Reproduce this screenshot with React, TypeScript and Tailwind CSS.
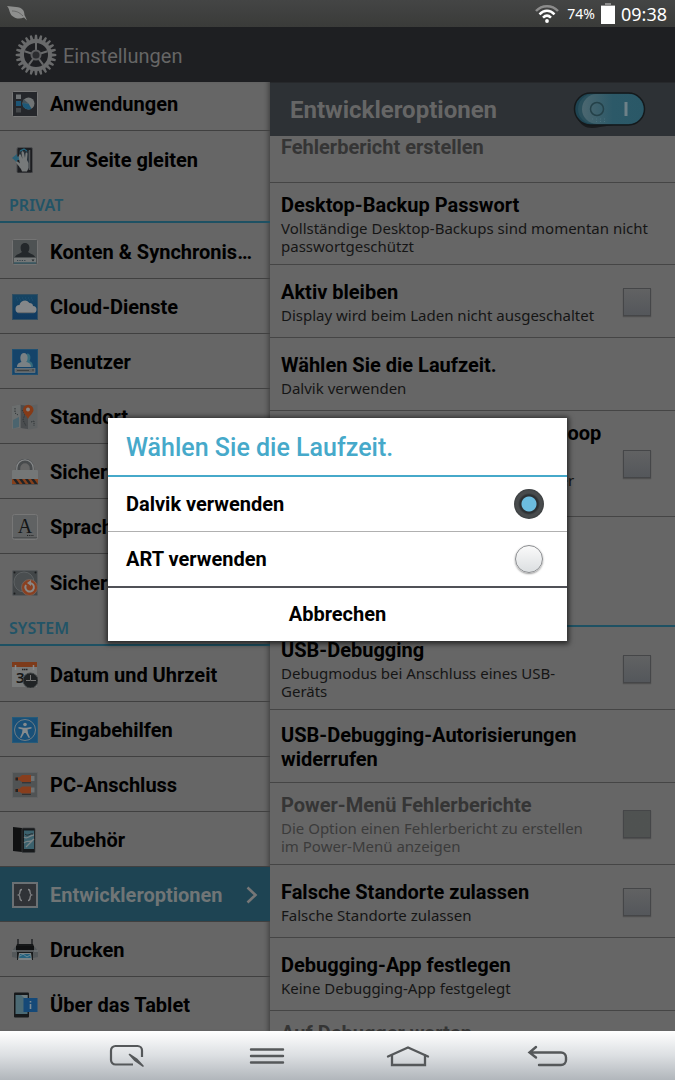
import type { ReactNode } from "react";

function Icon({ children }: { children: ReactNode }) {
  return (
    <svg viewBox="0 0 26 26" className="size-[26px] shrink-0" aria-hidden="true">
      {children}
    </svg>
  );
}

const AppsIcon = () => (
  <Icon>
    <rect x=".5" y=".5" width="25" height="25" rx="1" fill="#25272b" stroke="#787878" />
    <rect x="4" y="3.5" width="5" height="4.5" fill="#6f7375" />
    <rect x="4" y="10" width="5" height="5" fill="#1c5576" />
    <rect x="4" y="17" width="5" height="4.5" fill="#45484b" />
    <circle cx="16.5" cy="12.5" r="6" fill="#707475" />
    <path d="M16.500 12.500L10.500 12A6 6 0 0 0 19.500 17.700Z" fill="#1d5878" />
    <path d="M16.500 12.500L10.500 12A6 6 0 0 1 12 8.500Z" fill="#43525a" />
  </Icon>
);

const SlideIcon = () => (
  <Icon>
    <rect x="5" y=".5" width="15.500" height="25.500" rx="1.500" fill="#1c1d20" stroke="#4b4c4e" />
    <rect x="7" y="4" width="10" height="17" fill="#273138" />
    <path d="M17.500 3v20" stroke="#55585a" strokeWidth="1.500" />
    <path d="M0 11l5-4v2.500h4v3.500H5v2.500z" fill="#2a6076" />
    <path d="M7 12c-1-4 1-6 2-4l1.500 4-1-6c0-2.500 2-2.500 2.500 0l1 5 .5-4.500c.5-1.500 2-1 2 .5l-.5 6 1.500 3v5c-.5 2-1.500 3-1.500 3.500h-5c-1-4-5-7-6-9 0-2 2-1 4 1z" fill="#777a7a" />
    <path d="M8 4l4-2 3 2" fill="none" stroke="#26637a" strokeWidth="1.500" />
  </Icon>
);

const AccountIcon = () => (
  <Icon>
    <rect x=".5" y=".5" width="25" height="25" rx="1" fill="#4e5253" stroke="#737373" />
    <path d="M3 18c1-3 5-3 7-5-2-2-2.500-9 3-9s5 7 3 9c2 2 6 2 7 5z" fill="#24282b" />
    <rect x="2" y="19" width="22" height="4.500" fill="#747777" />
    <path d="M5 21.500h9" stroke="#37444d" strokeWidth="1.200" strokeDasharray="1.200 1.200" />
    <path d="M19.500 20.500h3l-1.500 2z" fill="#23292d" />
    <path d="M2 24h22" stroke="#2a5968" />
  </Icon>
);

const CloudIcon = () => (
  <Icon>
    <defs>
      <linearGradient id="cloud-sky" x2="0" y2="1">
        <stop stopColor="#174563" />
        <stop offset="1" stopColor="#103960" />
      </linearGradient>
    </defs>
    <rect x=".5" y=".5" width="25" height="25" fill="url(#cloud-sky)" stroke="#314d60" />
    <path d="M4 4h18M5 6h16" stroke="#275a78" strokeWidth=".7" strokeDasharray="1 2" />
    <path d="M7.500 19a4 4 0 0 1 0-8 5.500 5.500 0 0 1 10-2c2 0 3.500 1 3.500 3a3.500 3.500 0 0 1 0 7z" fill="#858789" />
    <path d="M6 18.700h16" stroke="#66696c" />
  </Icon>
);

const UserIcon = () => (
  <Icon>
    <rect x=".5" y=".5" width="25" height="25" fill="#15446a" stroke="#205071" />
    <path d="M15 4.500c4-.5 4 5.500 2.500 7.500 2 1 3.500 2 3.500 6h-6z" fill="#366c7d" />
    <path d="M5 18c0-3.500 2-4 4.500-5C7.500 10 8 4 12 4s4.500 6 2.500 9c2.500 1 4.500 1.500 4.500 5z" fill="#7a8184" />
    <rect x="3" y="19.500" width="20" height="4" fill="#5e6263" stroke="#7c8182" strokeWidth=".6" />
    <path d="M5 21.500h12M20 21h2" stroke="#34383a" strokeWidth=".8" />
  </Icon>
);

const LocationIcon = () => (
  <Icon>
    <path d="M0 2l8-1.500L16 2l9.500-1.500V24L17 25.500 9 24l-9 1z" fill="#5e6162" />
    <path d="M0 2l8-1.500V24l-8 1z" fill="#6b6e6e" />
    <path d="M9 1l7 1v23l-7-1z" fill="#4a4d4f" />
    <path d="M1 16l6-3v10l-6 1.500z" fill="#4b646e" />
    <path d="M3 4v5l3 2M10 6l3 4-2 6 3 6M19 18l3-1v5" stroke="#303537" strokeWidth="1" strokeDasharray="1.500 1" fill="none" />
    <path d="M16 15c-2-4-5-6-5-9a5 5 0 0 1 10.500 0c0 3-3.500 5-5.500 9z" fill="#853a17" />
    <circle cx="16" cy="5.500" r="2" fill="#858585" />
  </Icon>
);

const LockIcon = () => (
  <Icon>
    <path d="M6 12V9a7 7 0 0 1 14 0v3" fill="none" stroke="#484b4d" strokeWidth="4.500" />
    <path d="M4.800 12V9a8.200 8.200 0 0 1 16.400 0v3" fill="none" stroke="#858788" strokeWidth="1.200" />
    <rect x="0" y="11" width="26" height="10" rx="1" fill="#747777" />
    <rect x="0" y="20" width="26" height="5.500" fill="#86401b" />
    <path d="M1 20h3l4 5.500H5zM7 20h3l4 5.500h-3zM13 20h3l4 5.500h-3zM19 20h3l4 5.500h-3z" fill="#202326" />
    <path d="M0 25.500h26" stroke="#505050" />
  </Icon>
);

const LanguageIcon = () => (
  <Icon>
    <rect x=".5" y=".5" width="25" height="25" rx="2" fill="#606263" stroke="#777" />
    <path d="M1 23.500h24" stroke="#4d4f50" />
    <text x="13" y="18.500" textAnchor="middle" fontSize="20" fill="#141617" className="font-['Liberation_Serif',serif]">
      A
    </text>
    <path d="M15 21.500h7" stroke="#222" strokeWidth="1.200" strokeDasharray="1.200 1" />
  </Icon>
);

const BackupIcon = () => (
  <Icon>
    <rect x=".5" y=".5" width="25" height="25" rx="1" fill="#424648" stroke="#55585a" />
    <circle cx="12" cy="12" r="10" fill="#4a4e50" stroke="#5d6163" />
    <g fill="#1c1e20">
      <circle cx="2.500" cy="2.500" r="1" />
      <circle cx="23.500" cy="2.500" r="1" />
      <circle cx="2.500" cy="23.500" r="1" />
    </g>
    <circle cx="17.500" cy="17.500" r="8" fill="#8a4020" stroke="#74665f" strokeWidth=".8" />
    <path d="M14 15a4.300 4.300 0 1 0 4-2" fill="none" stroke="#888" strokeWidth="2" />
    <path d="M19 10v6l-4-3z" fill="#888" />
  </Icon>
);

const DateIcon = () => (
  <Icon>
    <rect x="0" y="1" width="25" height="24" fill="#777979" />
    <rect x="0" y="0" width="25" height="5" fill="#7d3b1b" />
    <path d="M3.500 3v5M21.500 3v5" stroke="#86898a" strokeWidth="1.500" />
    <path d="M10 7.500h6" stroke="#242424" strokeWidth="1.500" strokeDasharray="1.500 .5" />
    <text x="4" y="20.500" fontSize="15" fill="#151515" className="font-['Noto_Sans',sans-serif] font-semibold">
      3
    </text>
    <circle cx="18.500" cy="18.500" r="7.500" fill="#202325" stroke="#414546" strokeWidth="1" />
    <path d="M18.500 13v5.500H24M14 18.500h4" fill="none" stroke="#777" strokeWidth="1" />
  </Icon>
);

const AccessIcon = () => (
  <Icon>
    <rect x=".5" y=".5" width="25" height="25" fill="#195078" stroke="#255a79" />
    <circle cx="13" cy="13" r="10.500" fill="none" stroke="#707d84" />
    <circle cx="13" cy="7.500" r="1.800" fill="#858b8e" />
    <path d="M6.500 10l5 .7h3l5-.7v1.500l-4 1 .5 3.500 2 4.500-1.300.5-2.900-5h-1.600l-2.900 5-1.300-.5 2-4.500.5-3.500-4-1z" fill="#858b8e" />
  </Icon>
);

const CableIcon = () => (
  <Icon>
    <rect x=".5" y=".5" width="25" height="25" fill="#505354" stroke="#5f6162" />
    {[7, 18.5].map((y) => (
      <g key={y} transform={`translate(0 ${y})`}>
        <path d="M3 0c0-2 3-1.500 5-2 1-1.500 2-2 3.500-2H19v7h-7.500C10 3 9 2.500 8 1.500 6 1 3 2 3 0z" fill="#883e1d" />
        <path d="M3.500 -1.500h2.500v3H3.500z" fill="#202325" />
        <path d="M19 -3h3.500v5H19z" fill="#6f7273" />
        <path d="M10 3.800h9" stroke="#2a2c2e" />
      </g>
    ))}
  </Icon>
);

const AccessoryIcon = () => (
  <Icon>
    <path d="M1 0l9 1v24l-9-1z" fill="#101112" />
    <rect x="10" y="1" width="13" height="24.500" rx="1" fill="#17191b" stroke="#3e4143" strokeWidth=".7" />
    <rect x="12" y="3.500" width="10" height="18.500" fill="#3b616d" />
    <path d="M12 10c4 3 5-2 10-2M12 16c4-4 5 1 10-4M14 20l7-7" fill="none" stroke="#798285" strokeWidth="1.300" />
    <path d="M13 7c3 3 5-1 8 0" fill="none" stroke="#23292c" />
  </Icon>
);

const DeveloperIcon = () => (
  <Icon>
    <rect x="1" y="1" width="24" height="24" fill="#303337" stroke="#6b7073" strokeWidth="2" />
    <path d="M10 7.500c-2 0-2 1-2 2.500s0 2.500-1.500 3c1.500.5 1.500 1.500 1.500 3s0 2.500 2 2.500M16 7.500c2 0 2 1 2 2.500s0 2.500 1.500 3c-1.500.5-1.500 1.500-1.500 3s0 2.500-2 2.500" fill="none" stroke="#858789" strokeWidth="1.300" />
  </Icon>
);

const PrinterIcon = () => (
  <Icon>
    <path d="M6 2v5M20 2v5" stroke="#232527" strokeWidth="1.500" />
    <path d="M5 7h16l2 5H3z" fill="#161819" />
    <path d="M3 10h20l3 4v6l-5 1H5l-5-1v-6z" fill="#54585a" />
    <path d="M4 9h18v4H4z" fill="#101112" />
    <path d="M0 14h4M22 14h4" stroke="#7c8082" />
    <rect x="5" y="15" width="16" height="8" fill="#181a1b" />
    <path d="M7 16h12l1 7H6z" fill="#7b8385" />
    <path d="M8 17h10l.8 4H7.200z" fill="#26627e" />
    <path d="M8 19l3-2 4 3 3-2" stroke="#698894" fill="none" />
  </Icon>
);

const AboutIcon = () => (
  <Icon>
    <rect x="2" y=".5" width="15" height="25" rx="1" fill="#17191b" />
    <rect x="3.500" y="3" width="12" height="19" fill="#4c6a74" />
    <path d="M9 3h6.500v6z" fill="#6f7c80" />
    <rect x="11.500" y="6" width="14" height="14" fill="#154978" />
    <path d="M18.500 9v1.500M18.500 12v5" stroke="#7d8b94" strokeWidth="1.600" />
  </Icon>
);

function GearIcon() {
  const teeth = Array.from({ length: 24 }, (_, i) => i * 15);
  const spokes = [0, 72, 144, 216, 288];
  return (
    <svg viewBox="0 0 42 42" className="size-[42px] shrink-0" aria-hidden="true">
      <g fill="#696a6b">
        {teeth.map((a) => (
          <path key={a} d="M19.300 6l.7-5.300h2L22.700 6z" transform={`rotate(${a} 21 21)`} />
        ))}
      </g>
      <circle cx="21" cy="21" r="14" fill="none" stroke="#696a6b" strokeWidth="4" />
      <g stroke="#696a6b" strokeWidth="2">
        {spokes.map((a) => (
          <path key={a} d="M21 17V9" transform={`rotate(${a} 21 21)`} />
        ))}
      </g>
      <circle cx="21" cy="21" r="4.500" fill="#2c2d30" stroke="#5d5e60" strokeWidth="2" />
    </svg>
  );
}

function NavRow({ icon, label, first, last, active }: { icon: ReactNode; label: string; first?: boolean; last?: boolean; active?: boolean }) {
  return (
    <li
      className={`flex h-[55px] shrink-0 ${first ? "-mt-1.5" : ""} ${last ? "" : "border-b border-[#404040]"} ${
        active ? "bg-[#1e4453] text-[#707576]" : "text-black"
      }`}
    >
      <a href="#" aria-current={active ? "page" : undefined} className="flex min-w-0 flex-1 items-center gap-3 px-3 pt-0.5">
        {icon}
        <span className="min-w-0 flex-1 text-[20px] leading-6 font-bold whitespace-nowrap">{label}</span>
        {active && (
          <svg viewBox="0 0 12 18" className="h-[18px] w-3 shrink-0" aria-hidden="true">
            <path d="M1.500 1.500L9.500 9l-8 7.500" fill="none" stroke="#777" strokeWidth="2.600" />
          </svg>
        )}
      </a>
    </li>
  );
}

function NavSection({ title }: { title: string }) {
  return (
    <li className="mb-px flex h-[37px] shrink-0 items-center border-b-2 border-[#1e5163] px-[9px] pt-0.5">
      <h2 className="font-['Noto_Sans',sans-serif] text-[16px] leading-6 font-semibold text-[#225467]">{title}</h2>
    </li>
  );
}

type Option = { id: string; title: string; note?: string; check?: boolean; disabled?: boolean; size: string };

const upperOptions: Option[] = [
  { id: "backup", title: "Desktop-Backup Passwort", note: "Vollständige Desktop-Backups sind momentan nicht\npasswortgeschützt", size: "h-[82px]" },
  { id: "awake", title: "Aktiv bleiben", note: "Display wird beim Laden nicht ausgeschaltet", check: true, size: "h-[73px]" },
  { id: "runtime", title: "Wählen Sie die Laufzeit.", note: "Dalvik verwenden", size: "h-[73px]" },
  { id: "snoop", title: "Aktivieren Sie Bluetooth HCI-Snoop\nProtokoll", note: "Die Bluetooth HCI-Pakete werden in einer\nDatei erfasst", check: true, size: "h-[106px]" },
];

const lowerOptions: Option[] = [
  { id: "usb", title: "USB-Debugging", note: "Debugmodus bei Anschluss eines USB-\nGeräts", check: true, size: "h-[82px]" },
  { id: "revoke", title: "USB-Debugging-Autorisierungen\nwiderrufen", size: "h-[73px]" },
  { id: "power", title: "Power-Menü Fehlerberichte", note: "Die Option einen Fehlerbericht zu erstellen\nim Power-Menü anzeigen", check: true, disabled: true, size: "h-[82px]" },
  { id: "mock", title: "Falsche Standorte zulassen", note: "Falsche Standorte zulassen", check: true, size: "h-[73px]" },
  { id: "app", title: "Debugging-App festlegen", note: "Keine Debugging-App festgelegt", size: "h-[73px]" },
  { id: "wait", title: "Auf Debugger warten", disabled: true, size: "h-[44px]" },
];

function OptionRow({ id, title, note, check, disabled, size }: Option) {
  const body = (
    <>
      <span className={`block text-[20px] leading-6 font-bold ${disabled ? "text-[#353535]" : "text-black"}`}>{title}</span>
      {note && (
        <span className={`mt-0.5 block font-['Noto_Sans',sans-serif] text-[15px] leading-[18px] ${disabled ? "text-[#3b3b3b]" : "text-[#151515]"}`}>
          {note}
        </span>
      )}
    </>
  );
  return (
    <li className={`flex ${size} shrink-0 items-center border-b border-[#454545] pt-px pr-6 pl-[11px] whitespace-pre`}>
      {check ? (
        <>
          <label htmlFor={id} className="min-w-0 flex-1">
            {body}
          </label>
          <input
            id={id}
            type="checkbox"
            disabled={disabled}
            className="size-7 shrink-0 appearance-none border border-[#454648] bg-linear-to-b from-[#616263] to-[#54575b] shadow-[0_1px_1px_#505050] disabled:from-[#4f5251] disabled:to-[#4f5251]"
          />
        </>
      ) : (
        <button type="button" disabled={disabled} className="min-w-0 flex-1 text-left">
          {body}
        </button>
      )}
    </li>
  );
}

function RuntimeDialog() {
  return (
    <div
      role="dialog"
      aria-labelledby="runtime-title"
      className="w-[68%] bg-white text-[20px] leading-6 font-bold text-black shadow-[0_1px_5px_2px_rgba(0,0,0,0.6)]"
    >
      <h2 id="runtime-title" className="border-b-2 border-[#46a9ca] px-[18px] pt-[14px] pb-3 text-[25px] leading-[31px] font-medium text-[#46a9ca]">
        Wählen Sie die Laufzeit.
      </h2>
      <label className="flex h-[55px] items-center justify-between border-b border-[#b0b0b0] pr-[23px] pl-[18px]">
        Dalvik verwenden
        <input
          type="radio"
          name="runtime"
          defaultChecked
          className="size-[30px] shrink-0 appearance-none rounded-full bg-[radial-gradient(circle,#6cbde0_0_7px,#2c3033_8px_9px,#484b4d_11px_13px,#3a3d3f_15px)]"
        />
      </label>
      <label className="flex h-[56px] items-center justify-between border-b-2 border-[#505157] pt-px pr-6 pl-[18px]">
        ART verwenden
        <input
          type="radio"
          name="runtime"
          className="size-7 shrink-0 appearance-none rounded-full border border-[#8a8c8f] bg-linear-to-b from-[#fafafa] to-[#dcdfe1] shadow-[0_1px_2px_#999]"
        />
      </label>
      <button type="button" className="block h-[53px] w-full">
        Abbrechen
      </button>
    </div>
  );
}

export default function App() {
  return (
    <div className="flex h-screen flex-col overflow-hidden bg-[#666] font-[Roboto,'Noto_Sans',sans-serif]">
      <div className="flex h-[27px] shrink-0 items-center justify-between bg-linear-to-b from-[#444545] to-[#3a3b39] pr-2 pl-[7px] font-['Noto_Sans',sans-serif] text-white">
        <svg viewBox="0 0 20 15" className="h-[15px] w-5" aria-label="Energiesparmodus" role="img">
          <path d="M0 0c6 1 13 0 16 4 2 3 1 5 2 6l2 4.500-3-3c-4 2-9 1-11-1C2 8 3 3 0 0z" fill="#8e8f8e" />
          <path d="M5 5c4 0 7 1 11 5" fill="none" stroke="#5d5e5d" strokeWidth=".8" />
        </svg>
        <div className="flex items-center gap-[6px]">
          <svg viewBox="0 0 24 19" className="mr-[2px] h-[19px] w-6" aria-label="WLAN" role="img">
            <g fill="none" strokeWidth="2.500">
              <path d="M1 7c6-6.500 16-6.500 22 0" stroke="#8c8c8c" />
              <path d="M4.500 10.300c4.500-4.600 10.500-4.600 15 0M8 13.700c2.500-2.500 5.500-2.500 8 0" stroke="#fff" />
            </g>
            <circle cx="12" cy="17" r="1.900" fill="#fff" />
          </svg>
          <span className="text-[14px] leading-5">74%</span>
          <svg viewBox="0 0 14 21" className="h-[21px] w-[14px]" aria-label="Akku" role="img">
            <path d="M4 0h6v2h4v3H0V2h4z" fill="#8c8c8c" />
            <path d="M0 3h14v18H0z" fill="#fff" />
          </svg>
          <span className="text-[18px] leading-6">09:38</span>
        </div>
      </div>

      <div className="relative flex min-h-0 flex-1 flex-col">
        <header className="flex h-[55px] shrink-0 items-center gap-[6px] bg-[#1e1f22] pl-[15px]">
          <GearIcon />
          <h1 className="pt-0.5 text-[20px] leading-7 text-[#666]">Einstellungen</h1>
        </header>

        <div className="flex min-h-0 flex-1">
          <nav aria-label="Einstellungen" className="w-2/5 overflow-hidden shadow-[inset_-5px_0_4px_-3px_#444]">
            <ul className="flex flex-col">
              <NavRow icon={<AppsIcon />} label="Anwendungen" first />
              <NavRow icon={<SlideIcon />} label="Zur Seite gleiten" last />
              <NavSection title="PRIVAT" />
              <NavRow icon={<AccountIcon />} label="Konten & Synchronis…" />
              <NavRow icon={<CloudIcon />} label="Cloud-Dienste" />
              <NavRow icon={<UserIcon />} label="Benutzer" />
              <NavRow icon={<LocationIcon />} label="Standort" />
              <NavRow icon={<LockIcon />} label="Sicherheit" />
              <NavRow icon={<LanguageIcon />} label="Sprache" />
              <NavRow icon={<BackupIcon />} label="Sichern" last />
              <NavSection title="SYSTEM" />
              <NavRow icon={<DateIcon />} label="Datum und Uhrzeit" />
              <NavRow icon={<AccessIcon />} label="Eingabehilfen" />
              <NavRow icon={<CableIcon />} label="PC-Anschluss" />
              <NavRow icon={<AccessoryIcon />} label="Zubehör" />
              <NavRow icon={<DeveloperIcon />} label="Entwickleroptionen" active />
              <NavRow icon={<PrinterIcon />} label="Drucken" />
              <NavRow icon={<AboutIcon />} label="Über das Tablet" />
            </ul>
          </nav>

          <main className="flex min-w-0 flex-1 flex-col overflow-hidden">
            <div className="flex h-[54px] shrink-0 items-center justify-between border-t border-[#26282b] bg-[#2d3135] pr-7 pl-5">
              <h2 className="text-[24px] leading-7 font-bold text-[#666]">Entwickleroptionen</h2>
              <button type="button" role="switch" aria-checked="true" aria-label="Entwickleroptionen">
                <svg viewBox="0 0 74 40" className="h-10 w-[74px]" aria-hidden="true">
                  <defs>
                    <linearGradient id="knob">
                      <stop stopColor="#4c6770" />
                      <stop offset=".5" stopColor="#2c5968" />
                      <stop offset="1" stopColor="#2a5867" />
                    </linearGradient>
                  </defs>
                  <path d="M3 26c6 13 14 13 24 11l20-3H12z" fill="#191b1d" />
                  <rect x="1.500" y="3" width="70" height="32" rx="16" fill="#1e4452" stroke="#15191b" strokeWidth="1.500" />
                  <rect x="5" y="4" width="50" height="30" rx="15" fill="#2a4f5b" />
                  <rect x="9" y="4" width="61.500" height="30" rx="15" fill="url(#knob)" />
                  <circle cx="24" cy="19" r="6.500" fill="none" stroke="#244149" strokeWidth="1.500" />
                  <path d="M19 29h16M23 31.500h10" stroke="#4f7580" strokeWidth=".8" strokeDasharray="1 3" />
                  <path d="M53 12v14" stroke="#6e8188" strokeWidth="3" />
                </svg>
              </button>
            </div>
            <ul className="flex flex-col">
              <li className="flex h-[47px] shrink-0 items-start border-b border-[#454545] pl-[11px]">
                <button type="button" disabled className="text-[20px] leading-[22px] font-bold text-[#353535]">
                  Fehlerbericht erstellen
                </button>
              </li>
              {upperOptions.map((o) => (
                <OptionRow key={o.id} {...o} />
              ))}
              <li className="mb-px h-[110px] shrink-0 border-b-2 border-[#1e5163]" aria-hidden="true" />
              {lowerOptions.map((o) => (
                <OptionRow key={o.id} {...o} />
              ))}
            </ul>
          </main>
        </div>

        <div className="absolute inset-0 flex items-center justify-center">
          <RuntimeDialog />
        </div>
      </div>

      <div className="grid h-[49px] shrink-0 grid-cols-4 place-items-center bg-linear-to-b from-white via-[#dcdfe2] to-[#b1b6bb] px-[57px]">
        <button type="button" aria-label="QSlide">
          <svg viewBox="0 0 36 24" className="h-6 w-9" fill="none" stroke="#55585a" strokeWidth="2.200" aria-hidden="true">
            <path d="M24 20.500H6.500a4.500 4.500 0 0 1-4.500-4.500V6.500A4.500 4.500 0 0 1 6.500 2h22A4.500 4.500 0 0 1 33 6.500V13" />
            <path d="M20.500 10.500l5 5.500 8.500 6-6-6.500z" fill="#55585a" strokeWidth="1.600" strokeLinejoin="round" />
          </svg>
        </button>
        <button type="button" aria-label="Menü">
          <svg viewBox="0 0 36 18" className="h-[18px] w-9" aria-hidden="true">
            <path d="M2 2.500h32M2 9h32M2 15.500h32" stroke="#55585a" strokeWidth="2.400" strokeLinecap="round" />
          </svg>
        </button>
        <button type="button" aria-label="Startbildschirm">
          <svg viewBox="0 0 44 22" className="h-[22px] w-11" fill="none" stroke="#55585a" strokeWidth="2.300" strokeLinecap="round" aria-hidden="true">
            <path d="M2 11.500L22 2.500l20 9" />
            <path d="M6 10.500V20h33v-9.500" />
          </svg>
        </button>
        <button type="button" aria-label="Zurück">
          <svg viewBox="0 0 42 22" className="h-[22px] w-[42px]" fill="none" stroke="#55585a" strokeWidth="2.400" strokeLinecap="round" aria-hidden="true">
            <path d="M9 2L2.500 7.500 9 12.500M3 7.500h31a5 5 0 0 1 5 5V15a5 5 0 0 1-5 5H12" />
          </svg>
        </button>
      </div>
    </div>
  );
}
